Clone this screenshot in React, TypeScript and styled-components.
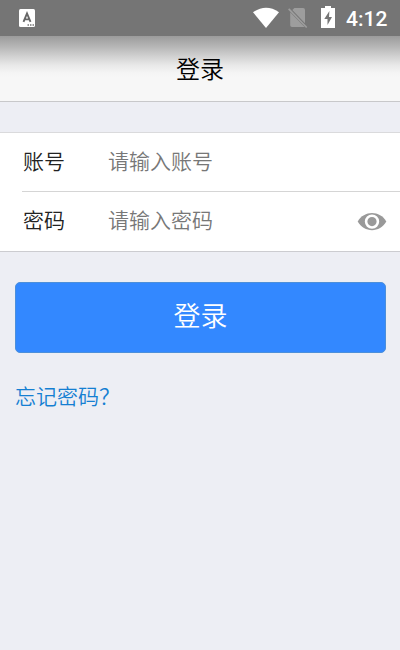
import React from "react";
import styled, { createGlobalStyle } from "styled-components";

const Global = createGlobalStyle`
  * { box-sizing: border-box; }
  body { margin: 0; background: #edeef4; font-family: "Noto Sans CJK SC", sans-serif; }
  button, input { font-family: inherit; }
`;
const Screen = styled.main`
  width: 400px; height: 650px; background: #edeef4; display: flex; flex-direction: column; overflow: hidden; font-weight: 350;
`;
const StatusBar = styled.div`
  height: 36px; flex: none; background: #757575; display: flex; align-items: center; padding: 0 12px 0 19px; color: #fff;
`;
const StatusIcons = styled.div`
  margin-left: auto; display: flex; align-items: center;
`;
const WifiIcon = styled.svg`
  width: 26px; height: 22px; margin-right: 9px;
`;
const SimIcon = styled.svg`
  width: 20px; height: 22px; margin-right: 13px;
`;
const BatteryIcon = styled.svg`
  width: 14px; height: 22px; margin-bottom: 2px;
`;
const Clock = styled.span`
  font: 500 21px/36px Roboto, sans-serif; margin-left: 11px; width: 42px; white-space: nowrap; padding-top: 1px;
`;
const Header = styled.header`
  height: 66px; flex: none; border-bottom: 1px solid #c8c8ca;
  background: linear-gradient(#9b9b9b 0, #b4b4b4 10px, #d0d0d0 20px, #e8e8e8 29px, #f5f5f5 37px, #f7f7f7 42px);
  display: flex; align-items: center; justify-content: center;
`;
const Title = styled.h1`
  margin: 0; padding-bottom: 2px; font-size: 24px; font-weight: 350; line-height: 36px; color: #000;
`;
const Form = styled.form`
  display: flex; flex-direction: column; padding-top: 30px;
`;
const Fields = styled.div`
  background: #fff; border-top: 1px solid #dadadc; border-bottom: 1px solid #ccccd0;
`;
const Row = styled.label<{ $divided?: boolean }>`
  display: flex; align-items: center; height: 59px; margin-left: 22px; padding-right: 13px;
  border-bottom: ${(p) => (p.$divided ? "1px solid #d5d5d5" : "0")};
`;
const Name = styled.span`
  width: 86px; padding: 0 0 4px 1px; font-size: 21px; line-height: 31px; color: #222;
`;
const Input = styled.input`
  flex: 1; min-width: 0; height: 35px; border: 0; padding: 0 0 5px; background: transparent; outline: 0;
  font-size: 21px; font-weight: 350; color: #222;
  &::placeholder { color: #777; opacity: 1; }
`;
const EyeIcon = styled.svg`
  width: 30px; height: 20px; flex: none;
`;
const Submit = styled.button`
  height: 71px; margin: 30px 14px 0 15px; border: 1px solid #4c8fda; border-radius: 5px; background: #3388ff;
  color: #fff; font-size: 27px; font-weight: 350; padding: 0 0 6px;
`;
const Forgot = styled.a`
  align-self: flex-start; margin: 27px 0 0 15px; font-size: 21px; line-height: 31px; color: #157fd2;
`;

export default function App() {
  return (
    <Screen>
      <Global />
      <StatusBar>
        <svg width="16" height="18" viewBox="0 0 16 18">
          <rect width="16" height="18" rx="1.5" fill="#fff" />
          <path d="M4.5 12.8 8 4.5l3.5 8.3M5.8 10.4h4.4" fill="none" stroke="#666" strokeWidth="1.9" />
          <path d="M8.5 16h1.5m1 0h1.5m1 0H15" stroke="#777" strokeWidth="1.3" />
        </svg>
        <StatusIcons>
          <WifiIcon viewBox="0 0 26 22"><path d="M0 5.2Q13-3.7 26 5.2L13 21Z" fill="#fff" /></WifiIcon>
          <SimIcon viewBox="0 0 20 22">
            <path d="M6.4 1H15q2 0 2 2v13.2L4.3 3.1ZM2.2 5.2 16.6 20H4q-1.8 0-1.8-1.8Z" fill="#9d9d9d" />
            <path d="m.7 1.8 18 18.7" stroke="#9d9d9d" strokeWidth="1.7" />
          </SimIcon>
          <BatteryIcon viewBox="0 0 14 22">
            <path d="M4 0h6v2h4v20H0V2h4Z" fill="#fff" />
            <path d="M8.4 5 3.3 13h3.2v6L11 11H8Z" fill="#757575" />
          </BatteryIcon>
        </StatusIcons>
        <Clock>4:12</Clock>
      </StatusBar>
      <Header><Title>登录</Title></Header>
      <Form>
        <Fields>
          <Row $divided><Name>账号</Name><Input placeholder="请输入账号" /></Row>
          <Row>
            <Name>密码</Name><Input type="password" placeholder="请输入密码" />
            <EyeIcon viewBox="0 0 30 20">
              <path d="M.7 9.6C7-1.9 23-1.9 29.3 9.6 23 21.1 7 21.1.7 9.6Z" fill="#999" />
              <circle cx="15" cy="9.6" r="5.9" fill="#999" stroke="#fff" strokeWidth="2.6" />
            </EyeIcon>
          </Row>
        </Fields>
        <Submit type="button">登录</Submit>
        <Forgot>忘记密码？</Forgot>
      </Form>
    </Screen>
  );
}
